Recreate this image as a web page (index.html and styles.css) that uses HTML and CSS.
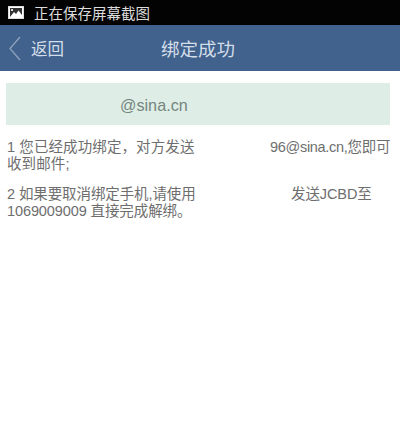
FILE: index.html
```html
<!DOCTYPE html>
<html lang="zh-CN">
<head>
	<meta charset="UTF-8">
	<title>绑定成功</title>
	<link rel="stylesheet" href="styles.css">
</head>
<body>
	<div class="status-bar">
		<svg class="status-icon" width="16" height="13" viewBox="0 0 16 13">
			<rect x="0.5" y="0.5" width="15" height="12" fill="#fff" stroke="#ddd"/>
			<rect x="2" y="2" width="12" height="9" fill="#333"/>
			<path d="M2 11 L6 6 L8 8 L10.5 4.5 L14 9 L14 11 Z" fill="#fff"/>
			<rect x="3" y="3" width="2" height="2" fill="#ddd"/>
		</svg>
		<span>正在保存屏幕截图</span>
	</div>
	<div class="title-bar">
		<div class="back">
			<svg width="13" height="25" viewBox="0 0 13 25">
				<path d="M12 1 L2 12.5 L12 24" fill="none" stroke="#8fa3bd" stroke-width="1.3"/>
			</svg>
			<span>返回</span>
		</div>
		<div class="title">绑定成功</div>
	</div>
	<div class="content">
		<div class="mail-box"><span>@sina.cn</span></div>
		<p class="tip tip-first"><span class="gap-a">1 您已经成功绑定，对方发送</span><span class="tail-a">96@sina.cn,您即可</span><br>收到邮件;</p>
		<p class="tip tip-second"><span class="gap-b">2 如果要取消绑定手机,请使用</span><span>发送JCBD至</span><br>1069009009 直接完成解绑。</p>
	</div>
</body>
</html>
```

FILE: styles.css
```css
html,body,div,span,p{
	padding: 0;
	margin: 0;
	border: 0;
}
body{
	width: 400px;
	height: 442px;
	overflow: hidden;
	background-color: #fff;
	font-family: "Liberation Sans", "Noto Sans CJK SC", sans-serif;
}
.status-bar{
	display: flex;
	align-items: center;
	height: 25px;
	padding-left: 8px;
	background-color: #030303;
	color: #dcdcdc;
	font-size: 14.5px;
}
.status-icon{
	margin-right: 10px;
}
.title-bar{
	display: flex;
	align-items: center;
	position: relative;
	height: 46px;
	background-color: #41628c;
	color: #d3deea;
}
.back{
	display: flex;
	align-items: center;
	padding-left: 8px;
	font-size: 16.5px;
}
.back span{
	margin-left: 10px;
}
.title{
	position: absolute;
	left: 0;
	right: 0;
	padding-right: 4px;
	text-align: center;
	font-size: 18.5px;
}
.content{
	padding: 12px 10px 0 6px;
	color: #6e6e6e;
	font-size: 14.5px;
	line-height: 17px;
}
.mail-box{
	height: 42px;
	line-height: 44px;
	padding-left: 114px;
	background-color: #deeee6;
	color: #75857e;
	font-size: 16.2px;
}
.tip{
	padding-left: 1px;
	white-space: nowrap;
}
.tip-first{
	margin-top: 14px;
	margin-bottom: 13px;
	letter-spacing: 0.1px;
}
.tip-second{
	letter-spacing: -0.1px;
}
.gap-a{
	display: inline-block;
	width: 263px;
}
.gap-b{
	display: inline-block;
	width: 284px;
}
.tail-a{
	letter-spacing: -0.3px;
}
```
